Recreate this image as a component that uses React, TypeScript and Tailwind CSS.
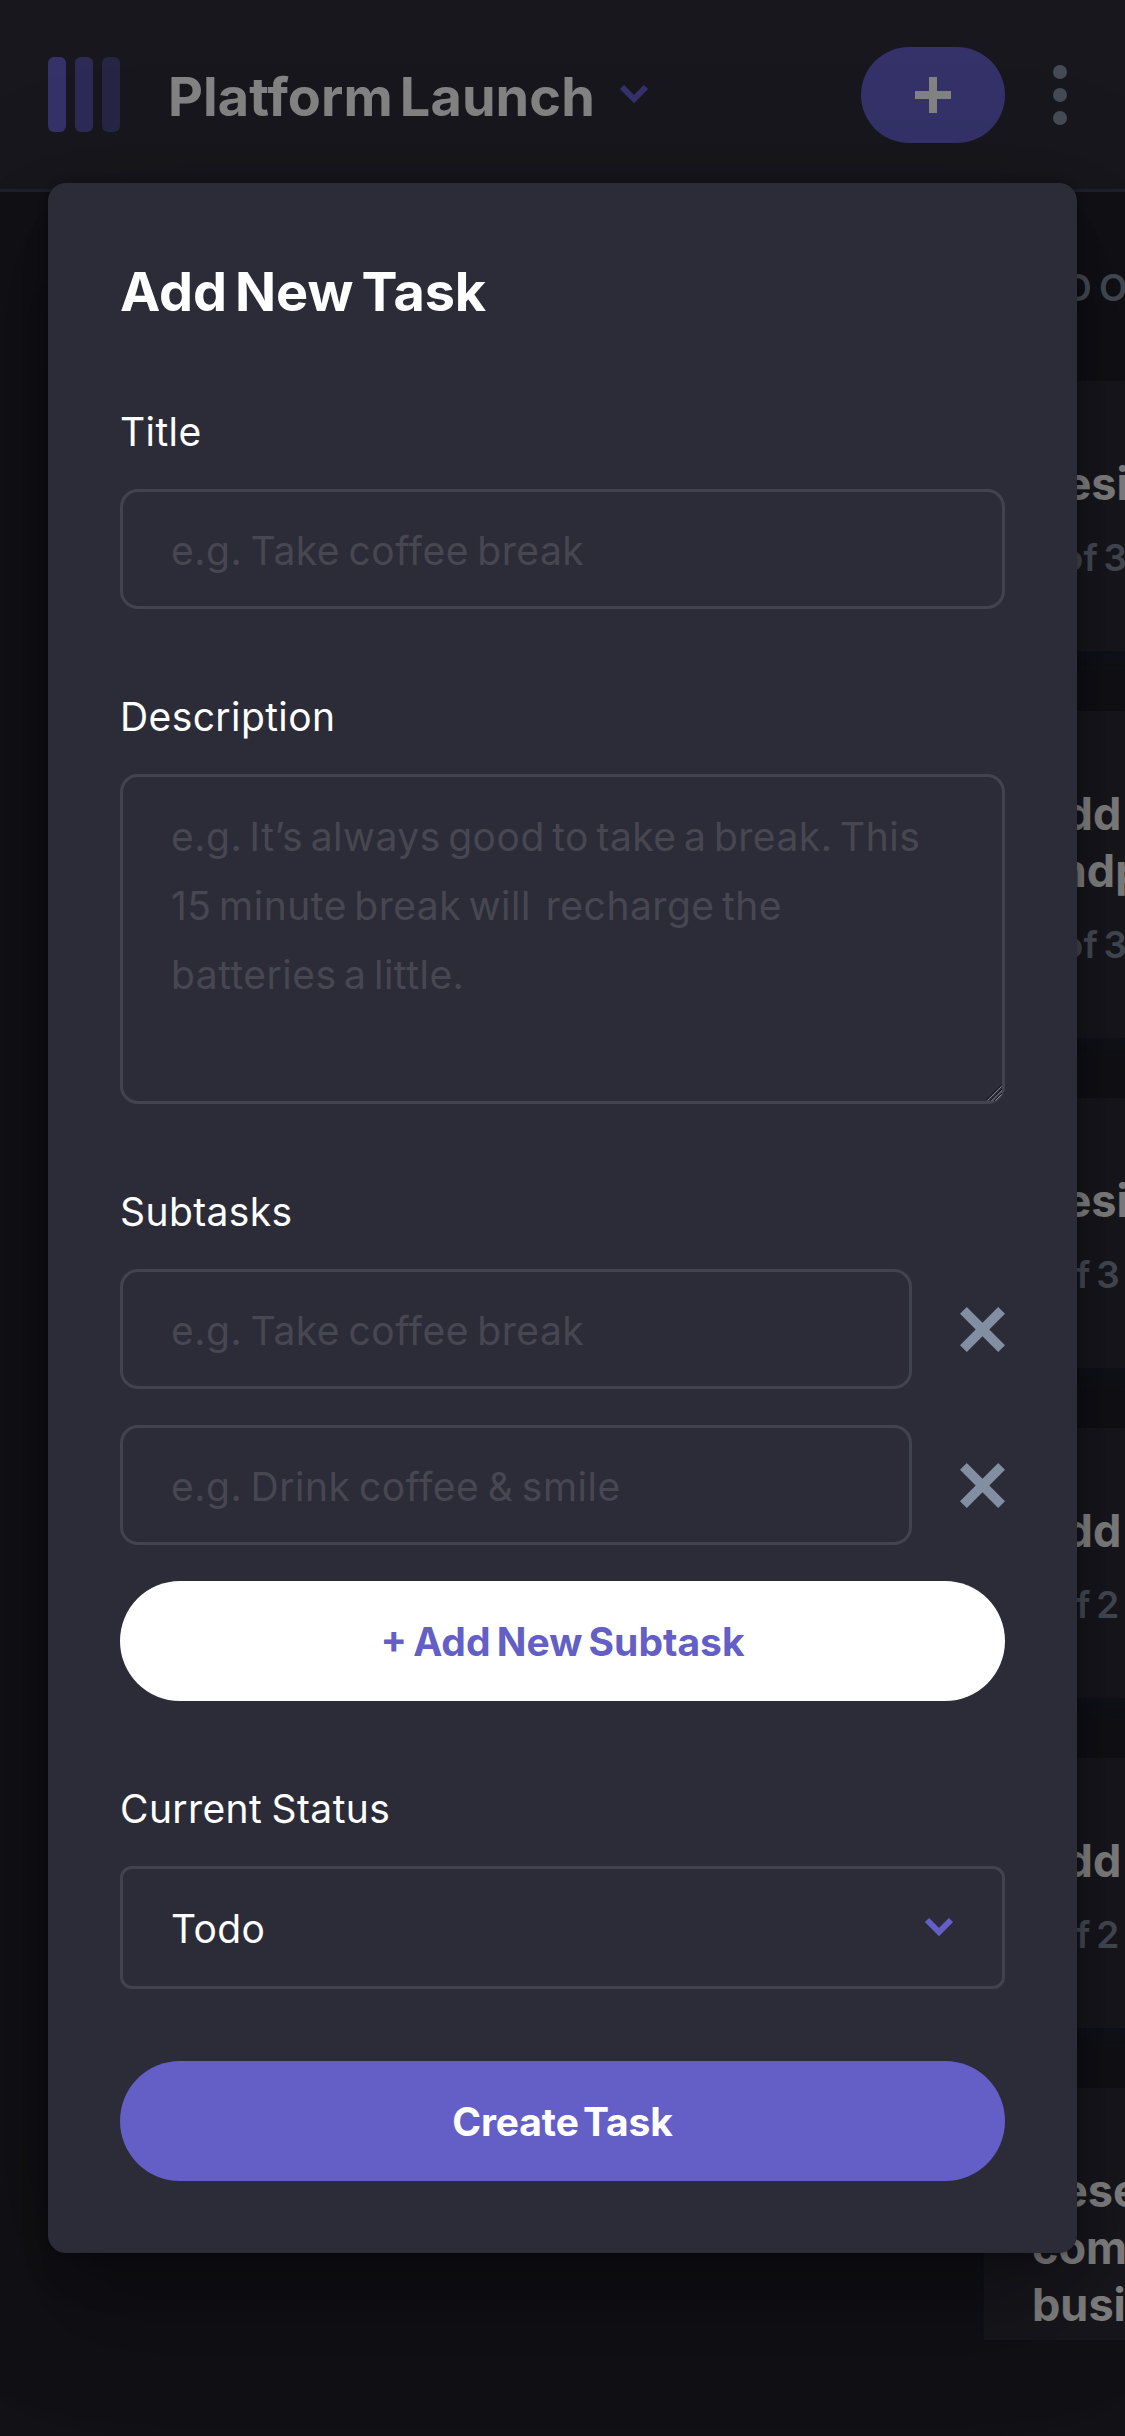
import type { ReactNode } from "react";

type Card = { title: string[]; progress: string };

const cards: Card[] = [
  { title: ["Design settings and search pages"], progress: "2 of 3 subtasks" },
  { title: ["Add account management", "endpoints"], progress: "2 of 3 subtasks" },
  { title: ["Design onboarding flow"], progress: "1 of 3 subtasks" },
  { title: ["Add search endpoints"], progress: "1 of 2 subtasks" },
  { title: ["Add authentication endpoints"], progress: "1 of 2 subtasks" },
  {
    title: ["Research pricing points of various", "competitors and trial different", "business models"],
    progress: "1 of 3 subtasks",
  },
];

function Chevron() {
  return (
    <svg width="30" height="21" viewBox="0 0 10 7" fill="none" stroke="#635fc7" strokeWidth="2">
      <path d="m1 1 4 4 4-4" />
    </svg>
  );
}

function Header() {
  return (
    <header className="flex h-[192px] items-center border-b-[3px] border-[#3e3f4e] bg-[#2c2c38] pr-[58px] pl-12">
      <div className="flex gap-[9px]">
        <span className="h-[75px] w-[18px] rounded-[6px] bg-[#635fc7]" />
        <span className="h-[75px] w-[18px] rounded-[6px] bg-[#635fc7]/75" />
        <span className="h-[75px] w-[18px] rounded-[6px] bg-[#635fc7]/50" />
      </div>
      <h1 className="mt-[5px] ml-[48px] w-[427px] text-[54px] leading-[68px] font-bold tracking-[0.1px] whitespace-nowrap text-[#f8f8f8] [word-spacing:-6px]">
        Platform Launch
      </h1>
      <div className="ml-[24px]">
        <Chevron />
      </div>
      <button className="ml-auto flex h-24 w-36 items-center justify-center rounded-full bg-[#635fc7]">
        <svg width="36" height="36" viewBox="0 0 36 36" fill="#f8f8f8">
          <path d="M14 0h8v14h14v8H22v14h-8V22H0v-8h14z" />
        </svg>
      </button>
      <svg className="ml-12" width="14" height="60" viewBox="0 0 14 60" fill="#828fa3">
        <circle cx="7" cy="7" r="7" />
        <circle cx="7" cy="30" r="7" />
        <circle cx="7" cy="53" r="7" />
      </svg>
    </header>
  );
}

function Board() {
  return (
    <main className="h-[2148px] overflow-hidden pt-[72px] pl-[984px]">
      <div className="w-[840px]">
        <div className="flex h-[45px] items-center gap-9">
          <span className="size-[45px] shrink-0 rounded-full bg-[#8471f2]" />
          <h2 className="pt-[2px] text-[37px] font-semibold tracking-[7.2px] text-[#828fa3]">DOING (6)</h2>
        </div>
        <div className="mt-[72px] flex flex-col gap-[60px]">
          {cards.map((card) => (
            <article
              key={card.title[0]}
              className="rounded-[24px] bg-[#2c2c38] px-12 pt-[74px] pb-[71px] shadow-[0_12px_18px_rgba(24,48,96,0.18)]"
            >
              <h3 className="text-[45px] leading-[57px] font-bold whitespace-nowrap text-[#f8f8f8]">
                {card.title.map((line) => (
                  <span key={line} className="block">
                    {line}
                  </span>
                ))}
              </h3>
              <p className="mt-[23px] text-[37px] leading-[45px] font-semibold tracking-[0.2px] text-[#828fa3] [word-spacing:-4px]">
                {card.progress}
              </p>
            </article>
          ))}
        </div>
      </div>
    </main>
  );
}

function Field({ label, children }: { label: string; children: ReactNode }) {
  return (
    <div className="flex flex-col gap-[33px]">
      <label className="text-[39px] leading-[49px] tracking-[0.4px] text-white [word-spacing:-2px]">{label}</label>
      {children}
    </div>
  );
}

function TextInput({ placeholder }: { placeholder: string }) {
  return (
    <input
      className="h-[120px] w-full min-w-0 rounded-[18px] border-[3px] border-[#41444f] bg-transparent px-[48px] pt-[2px] text-[39px] tracking-[0.5px] text-white [word-spacing:-3px] placeholder:text-[#474752]"
      placeholder={placeholder}
    />
  );
}

function ResizeGrip() {
  return (
    <svg className="absolute right-[3px] bottom-[3px]" width="16" height="16" viewBox="0 0 16 16" strokeWidth="0.9">
      <path d="M0 15 15 0M4 16 16 4M8 16l8-8" stroke="#15151b" />
      <path d="M1.5 15.5l14-14M5.5 16 16 5.5M9.5 15.5l6-6" stroke="#8c8c96" />
    </svg>
  );
}

function SubtaskRow({ placeholder }: { placeholder: string }) {
  return (
    <div className="flex items-center gap-12">
      <TextInput placeholder={placeholder} />
      <button className="shrink-0" aria-label="Remove subtask">
        <svg width="45" height="45" viewBox="0 0 15 15" fill="#828fa3">
          <path d="M12.728 0 15 2.272 9.772 7.5 15 12.728 12.728 15 7.5 9.772 2.272 15 0 12.728 5.228 7.5 0 2.272 2.272 0 7.5 5.228z" />
        </svg>
      </button>
    </div>
  );
}

function AddTaskModal() {
  return (
    <div className="absolute top-[183px] left-12 flex h-[2070px] w-[1029px] flex-col rounded-[18px] bg-[#2c2c38] p-[72px] shadow-[0_33px_45px_-21px_rgba(0,0,0,0.2),0_72px_114px_9px_rgba(0,0,0,0.14),0_27px_138px_24px_rgba(0,0,0,0.12),0_0_10px_rgba(0,0,0,0.3)]">
      <h2 className="-mt-px text-[54px] leading-[75px] font-bold tracking-[-0.1px] text-white [word-spacing:-4.5px]">
        Add New Task
      </h2>
      <div className="mt-[78px] flex flex-col gap-[83px]">
        <Field label="Title">
          <TextInput placeholder="e.g. Take coffee break" />
        </Field>
        <Field label="Description">
          <div className="relative">
            <textarea
              className="block h-[330px] w-full resize-none rounded-[18px] border-[3px] border-[#41444f] bg-transparent px-[48px] py-[25px] text-[39px] leading-[69px] tracking-[0.5px] text-white [word-spacing:-4px] placeholder:text-[#474752]"
              placeholder="e.g. It’s always good to take a break. This 15 minute break will  recharge the batteries a little."
            />
            <ResizeGrip />
          </div>
        </Field>
        <Field label="Subtasks">
          <div className="flex flex-col gap-9">
            <SubtaskRow placeholder="e.g. Take coffee break" />
            <SubtaskRow placeholder="e.g. Drink coffee & smile" />
            <button className="h-[120px] rounded-full bg-white pt-[3px] text-[39px] font-bold text-[#635fc7] [word-spacing:-3px]">
              + Add New Subtask
            </button>
          </div>
        </Field>
        <Field label="Current Status">
          <button className="flex h-[123px] items-center justify-between rounded-[12px] border-[3px] border-[#41444f] px-[48px]">
            <span className="pt-[3px] text-[39px] tracking-[0.4px] text-white">Todo</span>
            <Chevron />
          </button>
        </Field>
      </div>
      <button className="mt-[72px] h-[120px] shrink-0 rounded-full bg-[#635fc7] pt-[3px] text-[39px] font-bold tracking-[-0.1px] text-white [word-spacing:-5px]">
        Create Task
      </button>
    </div>
  );
}

export default function App() {
  return (
    <div className="relative h-[2436px] w-[1125px] overflow-hidden bg-[#21212b] font-[Inter,sans-serif]">
      <Header />
      <Board />
      <div className="absolute inset-0 bg-black/47" />
      <AddTaskModal />
    </div>
  );
}
